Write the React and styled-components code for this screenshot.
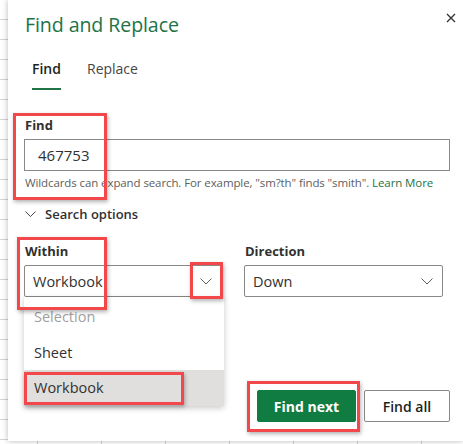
import React from 'react'
import styled, { createGlobalStyle } from 'styled-components'

const GlobalStyle = createGlobalStyle`
  html, body {
    margin: 0;
    padding: 0;
  }
  body {
    font-family: 'Open Sans', 'Noto Sans', sans-serif;
    color: #323130;
    background: #fff;
  }
`

const Sheet = styled.div`
  position: relative;
  width: 463px;
  height: 444px;
  overflow: hidden;
  background-color: #fff;
  background-image:
    repeating-linear-gradient(to bottom, transparent 0 19px, #d4d4d4 19px 20px),
    repeating-linear-gradient(to right, transparent 0 37px, #d4d4d4 37px 38px, transparent 38px 64px);
`

const Dialog = styled.div`
  position: relative;
  margin-left: 8px;
  width: 455px;
  height: 441px;
  box-sizing: border-box;
  background: #fff;
  box-shadow: 0 0 6px rgba(0, 0, 0, 0.28);
  padding: 11px 13px 0 16px;
  display: flex;
  flex-direction: column;
`

const Header = styled.div`
  display: flex;
  justify-content: space-between;
  align-items: flex-start;
  padding-left: 1px;
`

const Title = styled.h1`
  margin: 0;
  font-size: 19.6px;
  line-height: 28px;
  font-weight: 400;
  color: #217346;
  letter-spacing: -0.1px;
`

const CloseButton = styled.button`
  border: 0;
  background: none;
  padding: 0;
  margin: 0 -8px 0 0;
  width: 14px;
  height: 14px;
  display: flex;
  align-items: center;
  justify-content: center;
  cursor: pointer;
`

const Tabs = styled.div`
  display: flex;
  gap: 26px;
  margin-top: 20px;
  padding-left: 8px;
`

const Tab = styled.div`
  font-size: 14px;
  line-height: 20px;
  padding-bottom: 9px;
  color: ${p => (p.$active ? '#201f1e' : '#484644')};
  font-weight: ${p => (p.$active ? 600 : 400)};
  border-bottom: 2px solid ${p => (p.$active ? '#217346' : 'transparent')};
`

const Label = styled.div`
  font-size: 13px;
  line-height: 18px;
  font-weight: 700;
  color: #323130;
  padding-left: 1px;
  margin-top: ${p => p.$top || 0}px;
  margin-bottom: 5px;
`

const TextInput = styled.div`
  height: 32px;
  box-sizing: border-box;
  border: 1px solid #8a8886;
  padding: 0 13px;
  display: flex;
  align-items: center;
  font-size: 15px;
  color: #323130;
`

const Help = styled.div`
  margin-top: 4px;
  font-size: 11.5px;
  line-height: 16px;
  color: #605e5c;
  padding-left: 1px;
  letter-spacing: -0.1px;
  white-space: nowrap;
`

const LearnMore = styled.span`
  color: #217346;
`

const Toggle = styled.div`
  margin-top: 13px;
  display: flex;
  align-items: center;
  gap: 9px;
  font-size: 13px;
  line-height: 20px;
  font-weight: 600;
  color: #323130;
  padding-left: 1px;
`

const Options = styled.div`
  display: grid;
  grid-template-columns: 198px 199px;
  column-gap: 22px;
`

const SelectWrap = styled.div`
  position: relative;
`

const Select = styled.div`
  height: 32px;
  box-sizing: border-box;
  border: 1px solid #8a8886;
  border-radius: 2px;
  padding: 0 9px 0 8px;
  display: flex;
  align-items: center;
  justify-content: space-between;
  font-size: 14.5px;
  color: #323130;
`

const Menu = styled.div`
  position: absolute;
  left: 0;
  top: 32px;
  width: 200px;
  padding-top: 2px;
  background: #fff;
  box-shadow: 0 2px 6px rgba(0, 0, 0, 0.22);
  z-index: 2;
`

const MenuItem = styled.div`
  height: 35.5px;
  display: flex;
  align-items: center;
  padding-left: 10px;
  font-size: 14.5px;
  color: ${p => (p.$disabled ? '#a19f9d' : '#323130')};
  background: ${p => (p.$selected ? '#e1dfdd' : '#fff')};
`

const Actions = styled.div`
  margin-top: auto;
  margin-bottom: 19px;
  display: flex;
  justify-content: flex-end;
  gap: 8px;
`

const Button = styled.button`
  height: 32px;
  box-sizing: border-box;
  width: ${p => p.$width}px;
  font-family: inherit;
  font-size: 14px;
  border-radius: 2px;
  cursor: pointer;
  border: 1px solid ${p => (p.$primary ? '#107c41' : '#8a8886')};
  background: ${p => (p.$primary ? '#107c41' : '#fff')};
  color: ${p => (p.$primary ? '#fff' : '#201f1e')};
  font-weight: ${p => (p.$primary ? 700 : 600)};
`

const Mark = styled.div`
  position: absolute;
  left: ${p => p.$x}px;
  top: ${p => p.$y}px;
  width: ${p => p.$w}px;
  height: ${p => p.$h}px;
  box-sizing: border-box;
  border: 3px solid #f2474b;
  box-shadow: 1px 2px 4px rgba(0, 0, 0, 0.3);
  pointer-events: none;
  z-index: 5;
`

const Chevron = ({ size = 12, color = '#605e5c' }) => (
  <svg width={size} height={size / 2 + 1} viewBox="0 0 12 7" fill="none">
    <path d="M0.5 0.5 L6 6 L11.5 0.5" stroke={color} strokeWidth="1" />
  </svg>
)

const CloseIcon = () => (
  <svg width="10" height="10" viewBox="0 0 10 10" fill="none">
    <path d="M1 1 L9 9 M9 1 L1 9" stroke="#323130" strokeWidth="1.3" />
  </svg>
)

export default function App () {
  return (
    <>
      <GlobalStyle />
      <Sheet>
        <Dialog>
          <Header>
            <Title>Find and Replace</Title>
            <CloseButton aria-label="Close"><CloseIcon /></CloseButton>
          </Header>

          <Tabs>
            <Tab $active>Find</Tab>
            <Tab>Replace</Tab>
          </Tabs>

          <Label $top={26}>Find</Label>
          <TextInput>467753</TextInput>
          <Help>
            Wildcards can expand search. For example, "sm?th" finds "smith". <LearnMore>Learn More</LearnMore>
          </Help>

          <Toggle>
            <Chevron size={11} color="#323130" />
            Search options
          </Toggle>

          <Options>
            <div>
              <Label $top={18}>Within</Label>
              <SelectWrap>
                <Select>
                  Workbook
                  <Chevron />
                </Select>
                <Menu>
                  <MenuItem $disabled>Selection</MenuItem>
                  <MenuItem>Sheet</MenuItem>
                  <MenuItem $selected>Workbook</MenuItem>
                </Menu>
              </SelectWrap>
            </div>
            <div>
              <Label $top={18}>Direction</Label>
              <Select>
                Down
                <Chevron />
              </Select>
            </div>
          </Options>

          <Actions>
            <Button $primary $width={99}>Find next</Button>
            <Button $width={86}>Find all</Button>
          </Actions>
        </Dialog>

        <Mark $x={13} $y={113} $w={94} $h={87} />
        <Mark $x={17} $y={237} $w={90} $h={73} />
        <Mark $x={190} $y={262} $w={33} $h={37} />
        <Mark $x={24} $y={372} $w={160} $h={33} />
        <Mark $x={247} $y={381} $w={113} $h={51} />
      </Sheet>
    </>
  )
}
